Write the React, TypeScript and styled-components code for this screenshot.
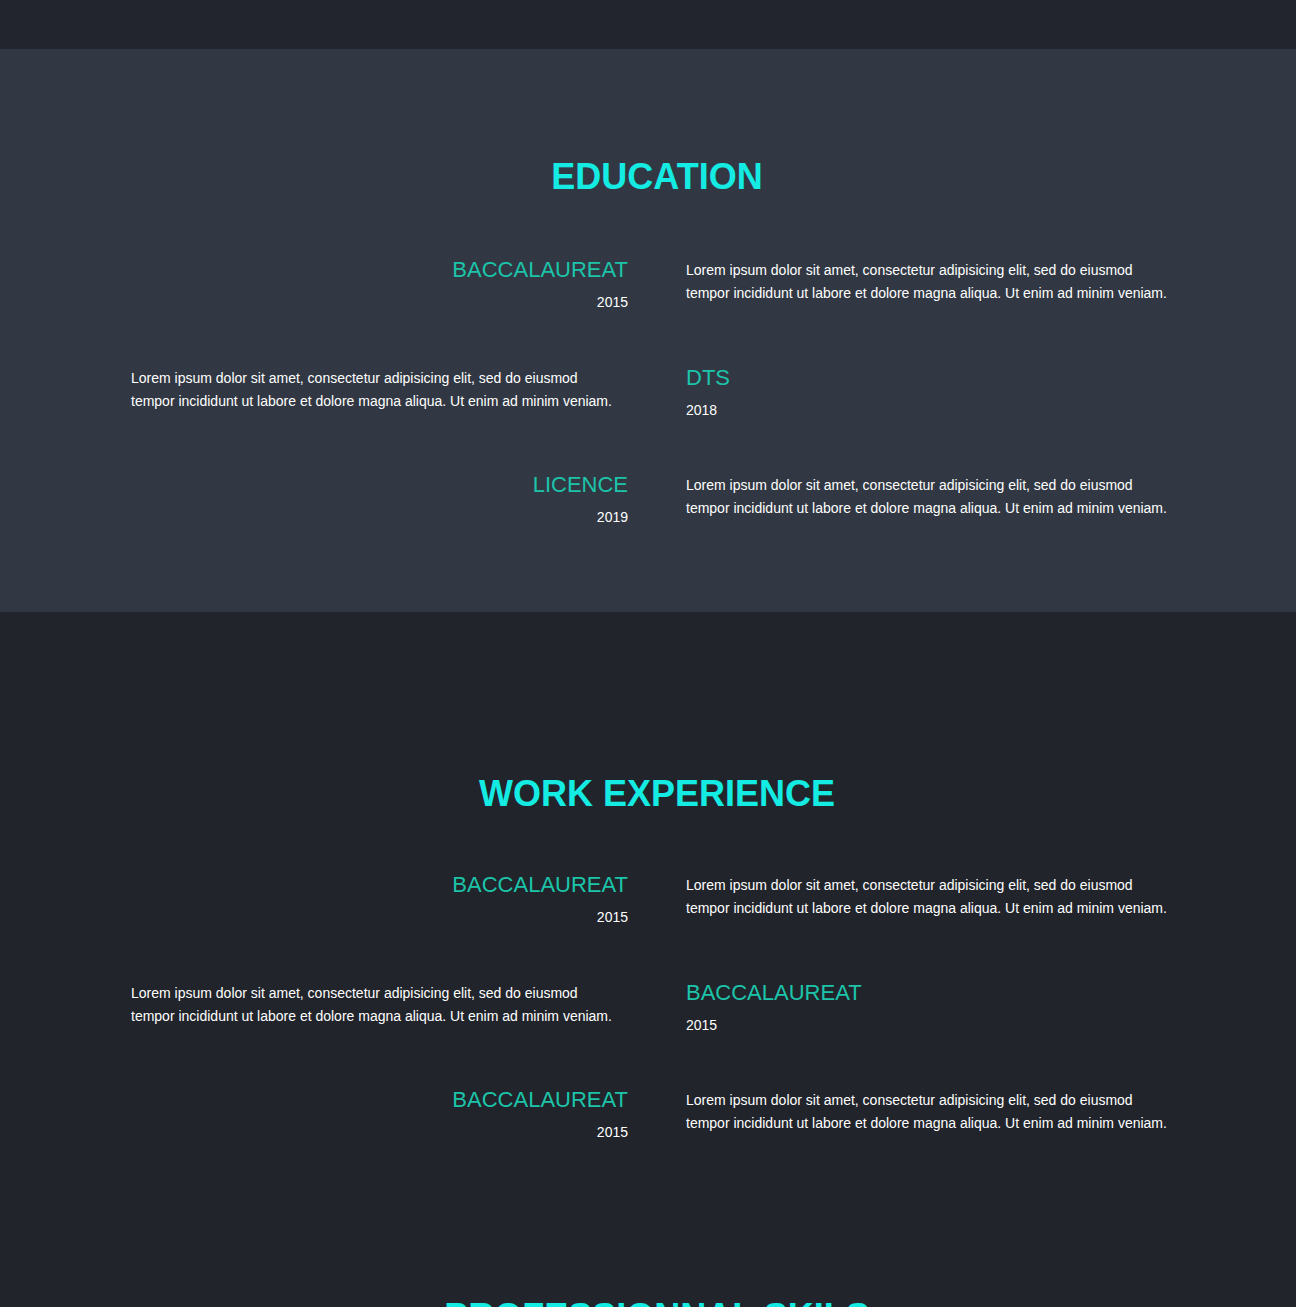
import React from 'react';
import styled, { createGlobalStyle } from 'styled-components';

const GlobalStyle = createGlobalStyle`
  html, body {
    margin: 0;
    padding: 0;
    background: #21242b;
    font-family: "Liberation Sans", Arial, sans-serif;
  }
`;

const LOREM =
  'Lorem ipsum dolor sit amet, consectetur adipisicing elit, sed do eiusmod tempor incididunt ut labore et dolore magna aliqua. Ut enim ad minim veniam.';

type Entry = { title: string; year: string };

const education: Entry[] = [
  { title: 'BACCALAUREAT', year: '2015' },
  { title: 'DTS', year: '2018' },
  { title: 'LICENCE', year: '2019' },
];

const work: Entry[] = [
  { title: 'BACCALAUREAT', year: '2015' },
  { title: 'BACCALAUREAT', year: '2015' },
  { title: 'BACCALAUREAT', year: '2015' },
];

const skills = [
  { name: 'HTML / CSS', level: 90 },
  { name: 'JavaScript', level: 75 },
  { name: 'React', level: 70 },
  { name: 'PHP', level: 60 },
];

const TopBar = styled.header`
  height: 49px;
  background: #22252d;
`;

const Section = styled.section<{ $light?: boolean; $top: number; $bottom: number }>`
  background: ${(p) => (p.$light ? '#313843' : '#21242b')};
  padding: ${(p) => p.$top}px 0 ${(p) => p.$bottom}px 18px;
`;

const Inner = styled.div`
  width: 1052px;
  margin: 0 auto;
`;

const Heading = styled.h2<{ $gap: number }>`
  margin: 0 0 ${(p) => p.$gap}px;
  font-size: 36px;
  line-height: 40px;
  font-weight: 700;
  color: #14ebe3;
  text-align: center;
  text-transform: uppercase;
`;

const Timeline = styled.div`
  display: grid;
  grid-template-columns: 497px 497px;
  column-gap: 58px;
  row-gap: 53.5px;
`;

const Cell = styled.div<{ $right?: boolean }>`
  text-align: ${(p) => (p.$right ? 'right' : 'left')};
`;

const Title = styled.h3`
  margin: 0 0 11px;
  font-size: 22px;
  line-height: 26px;
  font-weight: 400;
  color: #1cc4aa;
`;

const Year = styled.div`
  font-size: 14px;
  line-height: 17px;
  font-weight: 400;
  color: #ffffff;
`;

const Text = styled.p`
  margin: 2px 0 0;
  max-width: 486px;
  font-size: 14px;
  line-height: 23px;
  color: #ffffff;
`;

const SkillGrid = styled.div`
  display: grid;
  grid-template-columns: 1fr 1fr;
  gap: 30px 58px;
`;

const SkillName = styled.div`
  font-size: 14px;
  color: #ffffff;
  margin-bottom: 8px;
`;

const Track = styled.div`
  height: 8px;
  border-radius: 4px;
  background: #313843;
  overflow: hidden;
`;

const Fill = styled.div`
  height: 100%;
  background: #1cc4aa;
`;

const TimelineList = ({ items }: { items: Entry[] }) => (
  <Timeline>
    {items.map((it, i) => {
      const head = (
        <>
          <Title>{it.title}</Title>
          <Year>{it.year}</Year>
        </>
      );
      return i % 2 === 0 ? (
        <React.Fragment key={i}>
          <Cell $right>{head}</Cell>
          <Cell>
            <Text>{LOREM}</Text>
          </Cell>
        </React.Fragment>
      ) : (
        <React.Fragment key={i}>
          <Cell>
            <Text>{LOREM}</Text>
          </Cell>
          <Cell>{head}</Cell>
        </React.Fragment>
      );
    })}
  </Timeline>
);

export default function App() {
  return (
    <>
      <GlobalStyle />
      <TopBar />
      <Section $light $top={108} $bottom={86}>
        <Inner>
          <Heading $gap={60}>Education</Heading>
          <TimelineList items={education} />
        </Inner>
      </Section>
      <Section $top={162} $bottom={88}>
        <Inner>
          <Heading $gap={58}>Work Experience</Heading>
          <TimelineList items={work} />
        </Inner>
      </Section>
      <Section $top={68} $bottom={120}>
        <Inner>
          <Heading $gap={60}>Professionnal Skils</Heading>
          <SkillGrid>
            {skills.map((s) => (
              <div key={s.name}>
                <SkillName>{s.name}</SkillName>
                <Track>
                  <Fill style={{ width: `${s.level}%` }} />
                </Track>
              </div>
            ))}
          </SkillGrid>
        </Inner>
      </Section>
    </>
  );
}
